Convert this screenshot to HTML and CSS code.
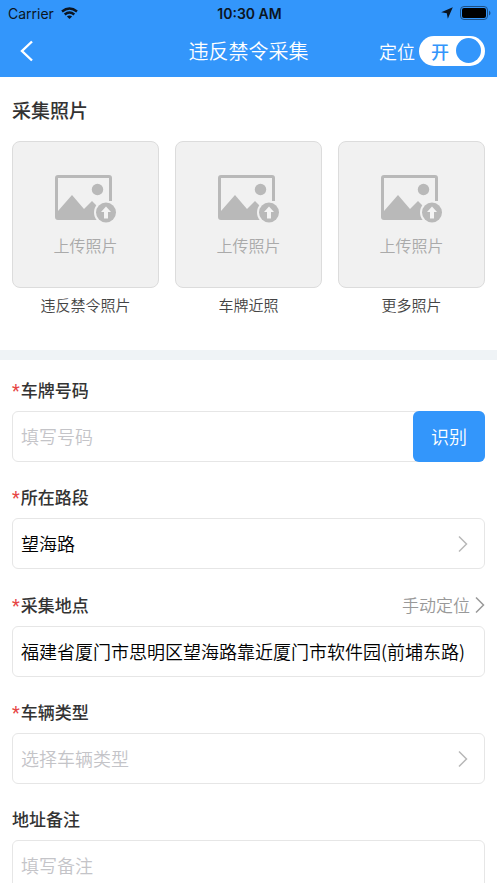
FILE: index.html
```html
<!DOCTYPE html>
<html lang="zh-CN">
<head>
<meta charset="utf-8">
<meta name="viewport" content="width=device-width, initial-scale=1">
<title>违反禁令采集</title>
<link rel="stylesheet" href="styles.css">
</head>
<body>
<svg class="sprite" aria-hidden="true">
  <symbol id="upload" viewBox="0 0 62 48">
    <path d="M3 0H54Q57 0 57 3V26H54V3H3V36L17 20L29 34L37 26L42 31V45H3Q0 45 0 42V3Q0 0 3 0Z" fill="#b9b9b9"/>
    <circle cx="42.500" cy="14.500" r="5.700" fill="#b9b9b9"/>
    <circle cx="51" cy="37.500" r="12" fill="#f1f1f1"/>
    <circle cx="51" cy="37.500" r="10" fill="#b9b9b9"/>
    <path d="M51 31.500L56 37H53V43.500H49V37H46Z" fill="#f4f4f4"/>
  </symbol>
  <symbol id="chevron" viewBox="0 0 10 18">
    <path d="M1 1.500L8.500 9L1 16.500" fill="none" stroke="currentColor" stroke-width="1.500"/>
  </symbol>
</svg>
<div class="app">
  <header class="header">
    <div class="status">
      <div class="status-left">
        <span>Carrier</span>
        <svg width="17" height="12" viewBox="0 0 17 12" fill="none" stroke="#0b1522" stroke-width="2.400">
          <path d="M1 4.500Q8.500 -1.700 16 4.500"/>
          <path d="M3.700 7.500Q8.500 3.500 13.300 7.500"/>
          <path d="M8.500 12L5.900 9.500Q8.500 7.500 11.100 9.500Z" fill="#0b1522" stroke="none"/>
        </svg>
      </div>
      <span class="time">10:30 AM</span>
      <div class="status-right">
        <svg width="12" height="12" viewBox="0 0 12 12"><path d="M11.800 .2L6.800 11.800L5.800 6.200L.2 5.200Z" fill="#0b1522"/></svg>
        <svg width="31" height="14" viewBox="0 0 31 14">
          <rect x=".5" y=".5" width="27" height="13" rx="3.500" fill="none" stroke="#1c4f84"/>
          <rect x="2" y="2" width="24" height="10" rx="2" fill="#000"/>
          <path d="M29 4.500Q30.500 5.500 30.500 7T29 9.500Z" fill="#1c4f84"/>
        </svg>
      </div>
    </div>
    <nav class="nav">
      <button class="back" type="button" aria-label="返回">
        <svg width="14" height="22" viewBox="0 0 14 22"><path d="M12 1.500L2 11L12 20.500" fill="none" stroke="#fff" stroke-width="2.400"/></svg>
      </button>
      <h1>违反禁令采集</h1>
      <label class="locate">
        <span>定位</span>
        <input type="checkbox" role="switch" checked>
        <span class="switch"><span>开</span><i class="knob"></i></span>
      </label>
    </nav>
  </header>
  <main class="content">
    <section class="photos">
      <h2>采集照片</h2>
      <div class="grid">
        <figure>
          <button class="tile" type="button"><svg width="62" height="48"><use href="#upload"/></svg><span>上传照片</span></button>
          <figcaption>违反禁令照片</figcaption>
        </figure>
        <figure>
          <button class="tile" type="button"><svg width="62" height="48"><use href="#upload"/></svg><span>上传照片</span></button>
          <figcaption>车牌近照</figcaption>
        </figure>
        <figure>
          <button class="tile" type="button"><svg width="62" height="48"><use href="#upload"/></svg><span>上传照片</span></button>
          <figcaption>更多照片</figcaption>
        </figure>
      </div>
    </section>
    <form class="form">
      <div class="field">
        <label for="plate"><span class="star">*</span>车牌号码</label>
        <div class="box">
          <input id="plate" type="text" placeholder="填写号码">
          <button class="scan" type="button">识别</button>
        </div>
      </div>
      <div class="field">
        <label for="road"><span class="star">*</span>所在路段</label>
        <div class="box">
          <select id="road"><option>望海路</option></select>
          <svg class="arrow" width="10" height="18"><use href="#chevron"/></svg>
        </div>
      </div>
      <div class="field">
        <div class="label-row">
          <label for="place"><span class="star">*</span>采集地点</label>
          <a class="manual" href="#place">手动定位<svg width="10" height="18"><use href="#chevron"/></svg></a>
        </div>
        <div class="box">
          <input id="place" type="text" value="福建省厦门市思明区望海路靠近厦门市软件园(前埔东路)">
        </div>
      </div>
      <div class="field">
        <label for="vehicle"><span class="star">*</span>车辆类型</label>
        <div class="box">
          <select id="vehicle" class="empty"><option>选择车辆类型</option></select>
          <svg class="arrow" width="10" height="18"><use href="#chevron"/></svg>
        </div>
      </div>
      <div class="field">
        <label for="remark">地址备注</label>
        <div class="box">
          <input id="remark" type="text" placeholder="填写备注">
        </div>
      </div>
    </form>
  </main>
</div>
</body>
</html>
```
FILE: styles.css
```css
* {
  box-sizing: border-box;
}

body {
  margin: 0;
  background: #fff;
  color: #333;
  font-family: "Noto Sans CJK SC", sans-serif;
  font-weight: 350;
}

button,
input,
select {
  margin: 0;
  padding: 0;
  border: 0;
  background: none;
  color: inherit;
  font: inherit;
}

svg {
  display: block;
  flex: none;
}

.sprite {
  display: none;
}

.app {
  display: flex;
  flex-direction: column;
  height: 100vh;
}

.header {
  flex: none;
  background: #3396fb;
}

.status,
.nav {
  display: grid;
  grid-template-columns: 1fr auto 1fr;
  align-items: center;
}

.status {
  height: 26px;
  padding: 0 6px 0 8px;
  color: #0b1522;
  font-family: Inter, sans-serif;
  font-size: 14px;
  font-weight: 400;
}

.status-left,
.status-right {
  display: flex;
  align-items: center;
  gap: 7px;
}

.status-right {
  justify-content: flex-end;
}

.time {
  font-weight: 600;
}

.nav {
  height: 51px;
  padding: 0 12px 2px;
  color: #fff;
}

.back {
  justify-self: start;
  padding: 0 8px;
}

h1 {
  margin: 0;
  font-size: 20px;
  font-weight: 350;
  line-height: 30px;
}

.locate {
  display: flex;
  align-items: center;
  justify-self: end;
  gap: 4px;
  font-size: 18px;
  line-height: 30px;
}

.locate input {
  position: absolute;
  opacity: 0;
}

.switch {
  display: flex;
  align-items: center;
  justify-content: space-between;
  width: 66px;
  height: 30px;
  padding: 0 4px 0 12px;
  border-radius: 15px;
  background: #fff;
  color: #3396fb;
  font-weight: 500;
}

.knob {
  width: 25px;
  height: 25px;
  border-radius: 50%;
  background: #3396fb;
}

.content {
  flex: 1;
  min-height: 0;
  overflow-y: auto;
  scrollbar-width: none;
}

.photos {
  padding: 18px 12px 33px;
  border-bottom: 10px solid #eff3f6;
}

h2 {
  margin: 0 0 16px;
  font-size: 19px;
  font-weight: 500;
  line-height: 30px;
}

.grid {
  display: grid;
  grid-template-columns: repeat(3, 1fr);
  gap: 16px;
}

figure {
  margin: 0;
}

.tile {
  display: flex;
  flex-direction: column;
  align-items: center;
  justify-content: center;
  gap: 10px;
  width: 100%;
  aspect-ratio: 1;
  padding-top: 3px;
  border: 1px solid #dcdcdc;
  border-radius: 8px;
  background: #f1f1f1;
  color: #aaa;
  font-size: 16px;
  line-height: 24px;
}

figcaption {
  margin-top: 5px;
  color: #444;
  font-size: 15px;
  line-height: 24px;
  text-align: center;
}

.form {
  padding: 18px 12px;
}

.field {
  margin-bottom: 23px;
}

.field label {
  display: block;
  font-size: 17px;
  font-weight: 500;
  line-height: 24px;
}

.field .star {
  margin-right: 1px;
  color: #e64545;
  font-family: Roboto, sans-serif;
  font-size: 18px;
  font-weight: 400;
  line-height: 1;
}

.label-row {
  display: flex;
  align-items: center;
  justify-content: space-between;
  height: 25px;
}

.manual {
  display: flex;
  align-items: center;
  gap: 5px;
  color: #999;
  font-size: 17px;
  line-height: 24px;
  text-decoration: none;
}

.box {
  display: flex;
  align-items: center;
  height: 51px;
  margin-top: 9px;
  border: 1px solid #e6e6e6;
  border-radius: 6px;
  color: #000;
  font-size: 18px;
}

.box input,
.box select {
  flex: 1;
  min-width: 0;
  height: 100%;
  padding: 0 8px 2px;
  outline: 0;
  appearance: none;
}

.box input::placeholder,
.box .empty {
  color: #c4c4c8;
  opacity: 1;
}

.scan {
  width: 72px;
  height: 51px;
  margin: -1px;
  padding-bottom: 2px;
  border-radius: 6px;
  background: #3396fb;
  color: #fff;
}

.arrow {
  margin-right: 16px;
  color: #b8b8b8;
}
```
